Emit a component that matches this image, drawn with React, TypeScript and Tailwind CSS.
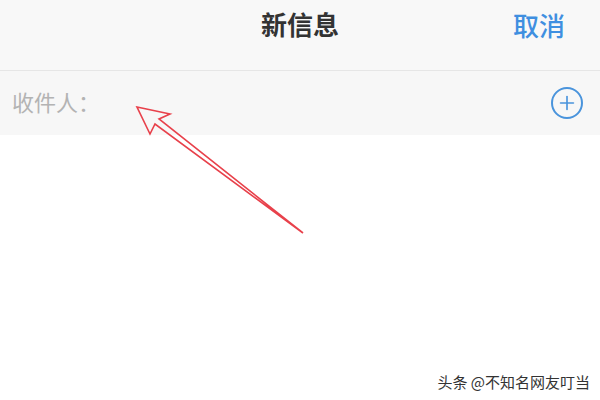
import { Plus } from 'lucide-react'

const FONT = { fontFamily: '"Noto Sans CJK SC", "Noto Sans", sans-serif' }

export default function App() {
  return (
    <div className="relative w-[600px] h-[400px] bg-white overflow-hidden" style={FONT}>
      {/* top bar */}
      <div className="relative h-[71px] bg-[#f8f8f8] flex items-center justify-center border-b border-[#e6e6e6]">
        <span className="text-[26px] font-bold text-[#333] leading-none -mt-[22px]">新信息</span>
        <span className="absolute right-[35px] top-[12px] text-[26px] font-medium text-[#3f8fe0] leading-none">取消</span>
      </div>

      {/* recipient row */}
      <div className="h-[64px] bg-[#f7f7f7] flex items-center justify-between pl-[12px] pr-[17px]">
        <span className="text-[22px] text-[#b3b3b3] leading-none -mt-[5px]">收件人：</span>
        <div className="w-[32px] h-[32px] rounded-full border-2 border-[#4a94dc] flex items-center justify-center">
          <Plus size={22} strokeWidth={1.8} className="text-[#4a94dc]" />
        </div>
      </div>

      {/* annotation arrow */}
      <svg className="absolute left-0 top-0" width="600" height="400" viewBox="0 0 600 400">
        <polygon
          points="137,107 170,114 159,119 303,233 155,124 150,134"
          fill="none"
          stroke="#e8414b"
          strokeWidth="1.6"
          strokeLinejoin="miter"
        />
      </svg>

      {/* watermark */}
      <div className="absolute right-[10px] bottom-[11px] text-[15px] text-[#333] leading-none">
        头条 @不知名网友叮当
      </div>
    </div>
  )
}
